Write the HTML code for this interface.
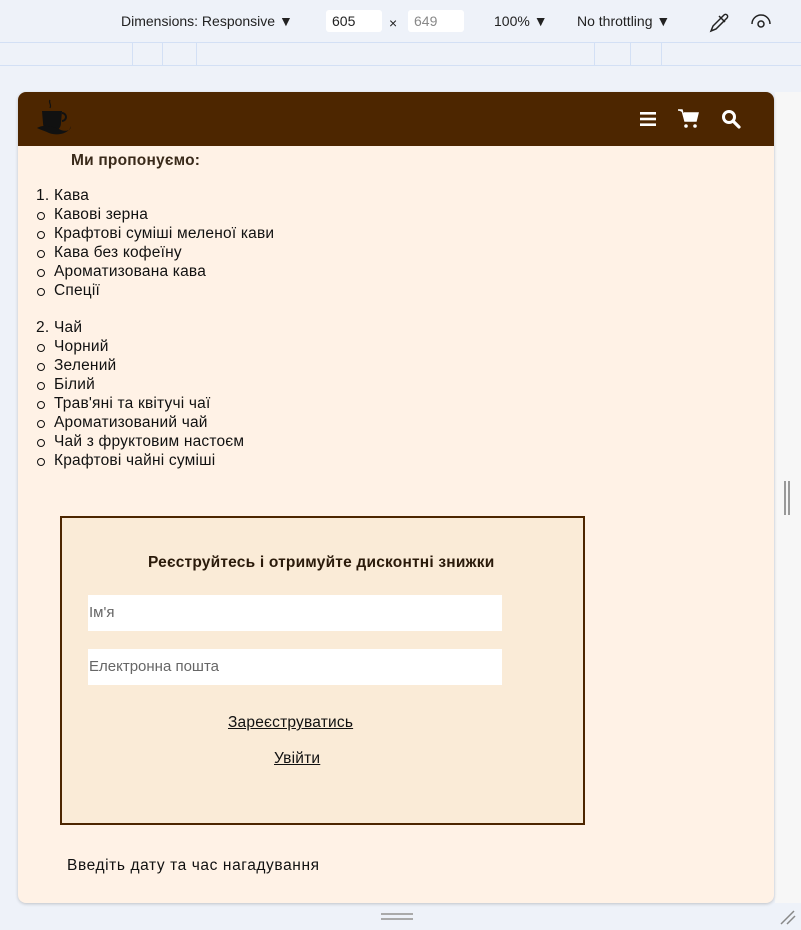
<!DOCTYPE html>
<html><head><meta charset="utf-8"><style>
*{margin:0;padding:0;box-sizing:border-box}
body{width:801px;height:930px;background:#eef2f9;font-family:"Liberation Sans",sans-serif;position:relative;overflow:hidden;color:#111}
.tb{position:absolute;top:0;left:0;width:801px;height:42px;font-size:14px;color:#222}
.tb span{position:absolute;top:13px}
.inp{position:absolute;top:10px;height:22px;background:#fff;border-radius:3px;font-size:14px;padding:3px 6px}
.ruler{position:absolute;top:42px;left:0;width:801px;height:24px;border-top:1px solid #d3e0f5;border-bottom:1px solid #d3e0f5}
.ruler i{position:absolute;top:0;height:23px;border-left:1px solid #d3e0f5}
.page{position:absolute;left:18px;top:92px;width:756px;height:811px;background:#fff2e6;border-radius:8px;overflow:hidden;box-shadow:0 1px 3px rgba(0,0,0,.2)}
.hdr{height:54px;background:#4d2600;position:relative}
.t{position:absolute;font-size:15.5px;line-height:19px;white-space:nowrap;letter-spacing:0.2px}
.b{font-weight:bold;color:#3a2a1a}
.li{padding-left:18px;position:relative}
.li:before{content:"";position:absolute;left:1px;top:7px;width:6px;height:6px;border:1px solid #111;border-radius:50%}
.num{position:relative;padding-left:18px}
.num span{position:absolute;left:0}
.form{position:absolute;left:42px;top:424px;width:525px;height:309px;border:2px solid #4d2600;background:#faebd7}
.field{position:absolute;left:26px;width:414px;height:36px;background:#fff;font-size:15px;color:#666;padding:9px 1px}
</style></head><body>
<div class="tb">
<span style="left:121px">Dimensions: Responsive ▼</span>
<div class="inp" style="left:326px;width:56px">605</div>
<span style="left:389px;top:15px">×</span>
<div class="inp" style="left:408px;width:56px;color:#888">649</div>
<span style="left:494px">100% ▼</span>
<span style="left:577px">No throttling ▼</span>
<svg style="position:absolute;left:708px;top:11px" width="22" height="22" viewBox="0 0 22 22" fill="none" stroke="#222" stroke-width="1.5"><path d="M3 20l2-5 8-8 3 3-8 8zM13 7l3-3a2 2 0 013 3l-3 3M11 5l6 6"/></svg>
<svg style="position:absolute;left:750px;top:12px" width="22" height="20" viewBox="0 0 22 20" fill="none" stroke="#222" stroke-width="1.5"><path d="M2 12a9 9 0 0118 0"/><circle cx="11" cy="12" r="3"/></svg>
</div>
<div class="ruler"><i style="left:132px"></i><i style="left:162px"></i><i style="left:196px"></i><i style="left:594px"></i><i style="left:630px"></i><i style="left:661px"></i></div>
<div style="position:absolute;left:775px;top:92px;width:26px;height:811px;background:#f7f7f7"></div>
<div style="position:absolute;left:784px;top:481px;width:6px;height:34px;border-left:2px solid #999;border-right:2px solid #999"></div>
<div class="page">
<div class="hdr">
<svg style="position:absolute;left:18px;top:6px" width="38" height="40" viewBox="0 0 38 40"><path d="M14 2c-2 3 2 4 0 8" stroke="#111" stroke-width="1.2" fill="none"/><path d="M6 13h20l-1 12a9 9 0 01-18 0z" fill="#111"/><path d="M26 15a4 4 0 010 8" stroke="#111" stroke-width="2" fill="none"/><path d="M1 30c6-4 16-2 24 2 6 2 10 0 10-4-2 8-14 10-22 7-4-2-8-3-12-5z" fill="#111"/></svg>
<svg style="position:absolute;left:622px;top:19px" width="18" height="16" viewBox="0 0 18 16"><rect y="1" width="16" height="2.6" fill="#fff"/><rect y="6.7" width="16" height="2.6" fill="#fff"/><rect y="12.4" width="16" height="2.6" fill="#fff"/></svg>
<svg style="position:absolute;left:660px;top:17px" width="22" height="20" viewBox="0 0 22 20"><path d="M0 1h4l3 11h11l2-8H6" fill="#fff" stroke="#fff" stroke-width="1.5"/><circle cx="8" cy="17" r="1.8" fill="#fff"/><circle cx="17" cy="17" r="1.8" fill="#fff"/></svg>
<svg style="position:absolute;left:703px;top:17px" width="20" height="20" viewBox="0 0 20 20"><circle cx="8" cy="8" r="5.5" fill="none" stroke="#fff" stroke-width="3"/><path d="M12 12l6 6" stroke="#fff" stroke-width="3.2" stroke-linecap="round"/></svg>
</div>
<div class="t b" style="left:53px;top:59px">Ми пропонуємо:</div>
<div class="t" style="left:18px;top:94px;line-height:19px">
<div class="num"><span>1.</span>Кава</div>
<div class="li">Кавові зерна</div><div class="li">Крафтові суміші меленої кави</div><div class="li">Кава без кофеїну</div><div class="li">Ароматизована кава</div><div class="li">Спеції</div>
<div class="num" style="margin-top:18px"><span>2.</span>Чай</div>
<div class="li">Чорний</div><div class="li">Зелений</div><div class="li">Білий</div><div class="li">Трав'яні та квітучі чаї</div><div class="li">Ароматизований чай</div><div class="li">Чай з фруктовим настоєм</div><div class="li">Крафтові чайні суміші</div>
</div>
<div class="form">
<div class="t b" style="left:86px;top:35px;color:#2a1a0a">Реєструйтесь і отримуйте дисконтні знижки</div>
<div class="field" style="top:77px">Ім'я</div>
<div class="field" style="top:131px">Електронна пошта</div>
<div class="t" style="left:166px;top:195px;text-decoration:underline">Зареєструватись</div>
<div class="t" style="left:212px;top:231px;text-decoration:underline">Увійти</div>
</div>
<div class="t" style="left:49px;top:764px;letter-spacing:0.6px">Введіть дату та час нагадування</div>
</div>
<div style="position:absolute;left:381px;top:913px;width:32px;height:7px;border-top:2px solid #aaa;border-bottom:2px solid #aaa"></div>
<svg style="position:absolute;left:779px;top:908px" width="18" height="18"><path d="M2 16L15 3M8 16l8-8" stroke="#888" stroke-width="1.5"/></svg>
</body></html>
